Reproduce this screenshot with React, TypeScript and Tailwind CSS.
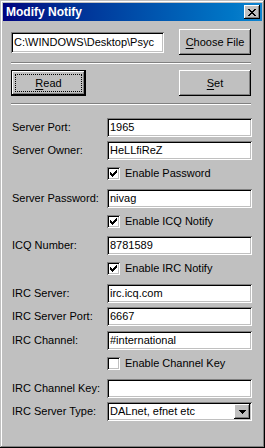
import React from "react";

const sunken =
  "shadow-[inset_1px_1px_0_#808080,inset_-1px_-1px_0_#ffffff,inset_2px_2px_0_#000000,inset_-2px_-2px_0_#c0c0c0]";
const raised =
  "shadow-[inset_-1px_-1px_0_#000000,inset_1px_1px_0_#ffffff,inset_-2px_-2px_0_#808080,inset_2px_2px_0_#c0c0c0]";

function CloseGlyph() {
  const rows = [
    "XX....XX",
    ".XX..XX.",
    "..XXXX..",
    "...XX...",
    "..XXXX..",
    ".XX..XX.",
    "XX....XX",
  ];
  return (
    <svg width="8" height="7" viewBox="0 0 8 7" shapeRendering="crispEdges">
      {rows.flatMap((r, y) =>
        r.split("").map((c, x) =>
          c === "X" ? <rect key={`${x}-${y}`} x={x} y={y} width="1" height="1" fill="#000" /> : null
        )
      )}
    </svg>
  );
}

function CheckGlyph() {
  const cols: [number, number][] = [
    [0, 2],
    [1, 3],
    [2, 4],
    [3, 3],
    [4, 2],
    [5, 1],
    [6, 0],
  ];
  return (
    <svg width="7" height="7" viewBox="0 0 7 7" shapeRendering="crispEdges">
      {cols.map(([x, y]) => (
        <rect key={x} x={x} y={y} width="1" height="3" fill="#000" />
      ))}
    </svg>
  );
}

function Field({ label, value, mt }: { label: string; value: string; mt: string }) {
  return (
    <div className={`flex items-center h-[19px] ${mt}`}>
      <div className="w-[96px] pl-[1px] text-[11px] leading-none whitespace-nowrap">{label}</div>
      <div
        className={`w-[145px] h-[19px] bg-white ${sunken} flex items-center pl-[3px] text-[11px] leading-none whitespace-nowrap overflow-hidden`}
      >
        {value}
      </div>
    </div>
  );
}

function Check({ label, checked, mt }: { label: string; checked: boolean; mt: string }) {
  return (
    <div className={`flex items-center h-[13px] pl-[96px] ${mt}`}>
      <div className={`w-[13px] h-[13px] bg-white ${sunken} flex items-center justify-center`}>
        {checked ? <CheckGlyph /> : null}
      </div>
      <div className="ml-[5px] text-[11px] leading-none whitespace-nowrap">{label}</div>
    </div>
  );
}

export default function App() {
  return (
    <div
      className="w-[265px] h-[448px] bg-[#c0c0c0] p-[3px] shadow-[inset_-1px_-1px_0_#000000,inset_1px_1px_0_#c0c0c0,inset_-2px_-2px_0_#808080,inset_2px_2px_0_#ffffff] flex flex-col font-['Liberation_Sans',Arial,sans-serif] text-black overflow-hidden"
    >
      <div className="h-[18px] bg-linear-to-r from-[#000080] to-[#1084d0] flex items-center pl-[3px] pr-[2px]">
        <span className="text-white font-bold text-[12px] leading-none">Modify Notify</span>
        <div className={`ml-auto w-[16px] h-[14px] bg-[#c0c0c0] ${raised} flex items-center justify-center`}>
          <CloseGlyph />
        </div>
      </div>

      <div className="flex flex-col pl-[8px] pr-[10px]">
        <div className="mt-[8px] flex items-center h-[26px]">
          <div
            className={`w-[153px] h-[21px] bg-white ${sunken} flex items-center pl-[3px] text-[11px] leading-none whitespace-nowrap overflow-hidden`}
          >
            C:\WINDOWS\Desktop\Psyc
          </div>
          <div
            className={`ml-auto mr-[1px] w-[72px] h-[26px] ${raised} flex items-center justify-center text-[11px] leading-none`}
          >
            <span>
              <span className="underline underline-offset-2">C</span>hoose File
            </span>
          </div>
        </div>

        <div className="mt-[7px] mr-[1px] h-[2px] border-t border-t-[#808080] border-b border-b-white" />

        <div className="mt-[6px] flex items-center h-[26px]">
          <div className="w-[75px] h-[26px] border border-black">
            <div className={`relative w-full h-full ${raised} flex items-center justify-center text-[11px] leading-none`}>
              <div className="absolute inset-[3px] border border-dotted border-black" />
              <span>
                <span className="underline underline-offset-2">R</span>ead
              </span>
            </div>
          </div>
          <div
            className={`ml-auto mr-[1px] w-[72px] h-[26px] ${raised} flex items-center justify-center text-[11px] leading-none`}
          >
            <span>
              <span className="underline underline-offset-2">S</span>et
            </span>
          </div>
        </div>

        <div className="mt-[7px] mr-[1px] h-[2px] border-t border-t-[#808080] border-b border-b-white" />

        <Field label="Server Port:" value="1965" mt="mt-[13px]" />
        <Field label="Server Owner:" value="HeLLfiReZ" mt="mt-[4px]" />
        <Check label="Enable Password" checked mt="mt-[7px]" />
        <Field label="Server Password:" value="nivag" mt="mt-[9px]" />
        <Check label="Enable ICQ Notify" checked mt="mt-[7px]" />
        <Field label="ICQ Number:" value="8781589" mt="mt-[8px]" />
        <Check label="Enable IRC Notify" checked mt="mt-[7px]" />
        <Field label="IRC Server:" value="irc.icq.com" mt="mt-[9px]" />
        <Field label="IRC Server Port:" value="6667" mt="mt-[4px]" />
        <Field label="IRC Channel:" value="#international" mt="mt-[5px]" />
        <Check label="Enable Channel Key" checked={false} mt="mt-[7px]" />
        <Field label="IRC Channel Key:" value="" mt="mt-[9px]" />

        <div className="flex items-center h-[19px] mt-[4px]">
          <div className="w-[96px] pl-[1px] text-[11px] leading-none whitespace-nowrap">IRC Server Type:</div>
          <div className={`w-[145px] h-[19px] bg-white ${sunken} flex items-center pl-[3px] pr-[2px] py-[2px]`}>
            <div className="flex-1 text-[11px] leading-none whitespace-nowrap overflow-hidden">DALnet, efnet etc</div>
            <div className={`w-[16px] h-[15px] bg-[#c0c0c0] ${raised} flex items-center justify-center`}>
              <svg width="7" height="4" viewBox="0 0 7 4" shapeRendering="crispEdges">
                <rect x="0" y="0" width="7" height="1" fill="#000" />
                <rect x="1" y="1" width="5" height="1" fill="#000" />
                <rect x="2" y="2" width="3" height="1" fill="#000" />
                <rect x="3" y="3" width="1" height="1" fill="#000" />
              </svg>
            </div>
          </div>
        </div>
      </div>
    </div>
  );
}
